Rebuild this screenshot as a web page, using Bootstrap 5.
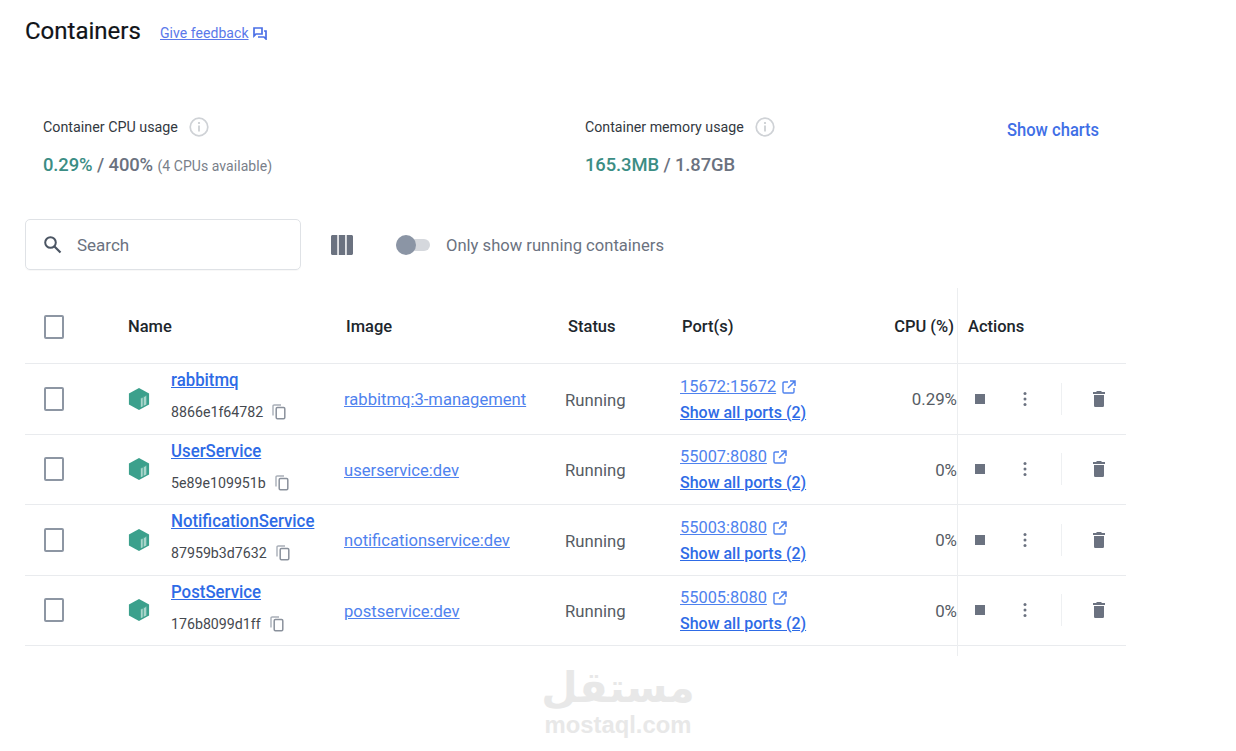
<!DOCTYPE html>
<html lang="en">
<head>
<meta charset="utf-8">
<title>Containers</title>
<link href="https://cdn.jsdelivr.net/npm/bootstrap@5.3.0/dist/css/bootstrap.min.css" rel="stylesheet">
<style>
body{font-family:Roboto,"Liberation Sans",sans-serif;background:#fff;color:#1f2937;height:751px;overflow:hidden;position:relative}
a{color:#2e6be6}
.shell{padding:15px 110px 0 25px}
.title-text{font-size:24px;line-height:32px;color:#101418;font-weight:400;margin:0;width:118px;white-space:nowrap;-webkit-text-stroke:.2px #101418}
.fb-link{font-size:14px;color:#5a78ea;margin-left:17px;letter-spacing:.05px;margin-top:4px}
.fb-icon{margin-top:4px}
.usage-row{margin-top:68px;padding-left:18px;height:72px}
.usage-a{width:542px}
.usage-b{width:422px}
.u-label{font-size:14.3px;line-height:24px;color:#33393f}
.usage-b .u-label{font-size:14.2px}
.u-info{margin-left:11px}
.u-value{font-size:18.4px;line-height:24px;margin-top:14px;color:#6b7280;font-weight:500;letter-spacing:-.1px}
.u-green{color:#3b8d84}
.u-note{font-size:14px;font-weight:400;color:#79808a;letter-spacing:.05px}
.charts-link{font-size:18px;font-weight:500;color:#3f6fe6;text-decoration:none;line-height:24px;transform:scaleX(.92);transform-origin:left;white-space:nowrap;margin-top:3px}
.tool-row{margin-top:32px;height:51px}
.search-box{width:276px;height:51px;border:1px solid #dfe2e6;border-radius:5px;padding-left:17px;color:#6b7280;font-size:17px;box-shadow:0 1px 1px rgba(0,0,0,.03)}
.search-box svg{margin-right:15px}
.search-word{padding-top:2px}
.cols-icon{margin-left:30px}
.fake-switch{width:34px;height:12px;border-radius:6px;background:#d5d8dd;margin-left:43px;position:relative;display:block}
.fake-knob{position:absolute;left:0;top:-4px;width:20px;height:20px;border-radius:50%;background:#8b95a5;display:block}
.switch-label{margin-left:16px;font-size:16.6px;color:#6b7280;padding-top:3px}
.grid-wrap{margin-top:19px;position:relative;width:1101px}
.v-rule{position:absolute;left:932px;top:-1px;bottom:-10px;width:1px;background:#eceef0}
.c-row{display:grid;grid-template-columns:103px 216px 221px 115px 200px 77px 1fr;border-bottom:1px solid #e9ebee;align-items:center;height:70.5px}
.c-head{height:75px;font-size:16.5px;font-weight:500;color:#20262c;padding-top:2px}
.c-head>div:nth-child(3){padding-left:2px}
.c-head>div:nth-child(4){padding-left:3px}
.c-head>div:nth-child(5){padding-left:2px}
.box-mark{width:20px;height:24px;border:2px solid #8d96a3;border-radius:2px;margin-left:19px;display:block}
.c-name{display:flex;align-items:center;gap:21px}
.n-title{font-size:17.5px;font-weight:500;line-height:24px;color:#2e6be6;display:inline-block;white-space:nowrap;transform:scaleX(.96);transform-origin:left}
.n-id{font-size:14.2px;color:#45494f;line-height:18px;margin-top:10px;white-space:nowrap}
.n-id svg{margin-left:9px;vertical-align:-3px}
.name-stack{margin-top:-8px}
.img-cell{padding-top:4px}
.i-link{font-size:16.6px;color:#4f82ee;white-space:nowrap}
.st-text{font-size:16.7px;color:#565c64;padding-top:3px}
.p-wrap{padding-top:1px}
.p-top{font-size:16.4px;line-height:25px;color:#4f82ee;white-space:nowrap}
.p-top svg{margin-left:6px;vertical-align:-2px}
.p-all{display:block;font-size:16.9px;font-weight:500;line-height:26px;color:#2e6be6;white-space:nowrap;transform:scaleX(.947);transform-origin:left}
.cpu-cell{text-align:right;font-size:16.9px;color:#565c64;white-space:nowrap;margin-left:-30px;padding-top:2px}
.act-cell{display:flex;align-items:center;padding-left:18px;height:100%}
.act-stop{width:10px;height:10px;background:#6b7280;display:block}
.act-more{margin-left:38px}
.act-sep{width:1px;height:32px;background:#eef0f2;margin-left:34px}
.act-del{margin-left:31px}
.c-head .cpu-cell{font-size:16.5px;font-weight:500;color:#20262c;padding-right:3px;padding-top:0}
.c-head .act-cell{padding-left:11px}
.water{position:absolute;left:518px;top:662px;width:200px;text-align:center;color:#e8e8e8;line-height:1}
.water-ar{font-family:"DejaVu Sans",sans-serif;font-weight:700;font-size:42px;line-height:52px;height:51px;display:block;white-space:nowrap}
.water-en{font-family:"Liberation Sans",sans-serif;font-weight:700;font-size:23.8px;line-height:24px;height:24px;display:block;white-space:nowrap}
</style>
</head>
<body>
<svg width="0" height="0" class="d-block" style="position:absolute">
<defs>
<symbol id="ic-copy" viewBox="0 0 14 16"><rect x="4.2" y="3.6" width="8.6" height="11.2" rx="1.2" fill="none" stroke="#8a919c" stroke-width="1.5"/><path d="M1 11.5V2.2C1 1.5 1.5 1 2.2 1H9" fill="none" stroke="#a9afb8" stroke-width="1.4"/></symbol>
<symbol id="ic-ext" viewBox="0 0 14 14"><path d="M6 2H2.2C1.5 2 1 2.5 1 3.2v8.6c0 .7.5 1.2 1.2 1.2h8.6c.7 0 1.2-.5 1.2-1.2V8" fill="none" stroke="#4f82ee" stroke-width="1.4"/><path d="M8 1h5v5M13 1L6 8" fill="none" stroke="#4f82ee" stroke-width="1.5"/></symbol>
<symbol id="ic-cube" viewBox="0 0 22 24"><path d="M11 0l11 6v12l-11 6L0 18V6z" fill="#3ba08c"/><path d="M13 11l6-3v10l-6 3z" fill="#a9d6cb"/><path d="M15.6 9.8v10M13 11l6-3" stroke="#3ba08c" stroke-width="1" fill="none"/></symbol>
<symbol id="ic-dots" viewBox="0 0 4 16"><circle cx="2" cy="2.5" r="1.5" fill="#6b7280"/><circle cx="2" cy="8" r="1.5" fill="#6b7280"/><circle cx="2" cy="13.5" r="1.5" fill="#6b7280"/></symbol>
<symbol id="ic-trash" viewBox="0 0 12 16"><path d="M4 0h4l1 1h3v2H0V1h3zM1 4h10v10.4c0 .9-.7 1.6-1.6 1.6H2.6C1.700 16 1 15.300 1 14.400z" fill="#6b7280"/></symbol>
<symbol id="ic-info" viewBox="0 0 20 20"><circle cx="10" cy="10" r="8.800" fill="none" stroke="#cfd2d6" stroke-width="1.700"/><rect x="9.200" y="8.500" width="1.600" height="6" fill="#c6cace"/><circle cx="10" cy="6" r="1.100" fill="#c6cace"/></symbol>
</defs>
</svg>
<main class="shell">
  <header class="d-flex align-items-center">
    <h1 class="title-text">Containers</h1>
    <a href="#" class="fb-link">Give feedback</a>
    <svg class="ms-1 fb-icon" width="14" height="13" viewBox="0 0 14 13"><path d="M1 1h8v6H3L1 9z" fill="#fff" stroke="#4a6fe6" stroke-width="1.700"/><path d="M11 4h2v8l-2-2H5" fill="none" stroke="#4a6fe6" stroke-width="1.700"/></svg>
  </header>

  <section class="usage-row d-flex">
    <div class="usage-a">
      <div class="u-label d-flex align-items-center">Container CPU usage<svg class="u-info" width="20" height="20"><use href="#ic-info"/></svg></div>
      <div class="u-value"><span class="u-green">0.29%</span> / 400% <span class="u-note">(4 CPUs available)</span></div>
    </div>
    <div class="usage-b">
      <div class="u-label d-flex align-items-center">Container memory usage<svg class="u-info" width="20" height="20"><use href="#ic-info"/></svg></div>
      <div class="u-value"><span class="u-green">165.3MB</span> / 1.87GB</div>
    </div>
    <a href="#" class="charts-link">Show charts</a>
  </section>

  <section class="tool-row d-flex align-items-center">
    <div class="search-box d-flex align-items-center">
      <svg width="19" height="19" viewBox="0 0 19 19"><circle cx="7.500" cy="7.500" r="5.300" fill="none" stroke="#4b5563" stroke-width="2"/><path d="M11.500 11.500l6 6" stroke="#4b5563" stroke-width="2.200"/></svg>
      <span class="search-word">Search</span>
    </div>
    <svg class="cols-icon" width="22" height="20" viewBox="0 0 22 20"><path d="M0 1.500C0 .7.700 0 1.500 0H6.300v20H1.500C.7 20 0 19.300 0 18.500zM7.800 0h6.400v20H7.800zM15.700 0h4.800c.8 0 1.500.7 1.500 1.500v17c0 .8-.7 1.500-1.500 1.500h-4.800z" fill="#6b7280"/></svg>
    <span class="fake-switch"><span class="fake-knob"></span></span>
    <span class="switch-label">Only show running containers</span>
  </section>

  <section class="grid-wrap">
    <div class="v-rule"></div>
    <div class="c-row c-head">
      <div><span class="box-mark"></span></div>
      <div>Name</div><div>Image</div><div>Status</div><div>Port(s)</div>
      <div class="cpu-cell">CPU (%)</div>
      <div class="act-cell">Actions</div>
    </div>

    <div class="c-row">
      <div><span class="box-mark"></span></div>
      <div class="c-name"><svg width="22" height="22"><use href="#ic-cube"/></svg><div class="name-stack"><a href="#" class="n-title">rabbitmq</a><div class="n-id">8866e1f64782<svg width="14" height="16"><use href="#ic-copy"/></svg></div></div></div>
      <div class="img-cell"><a href="#" class="i-link">rabbitmq:3-management</a></div>
      <div class="st-text">Running</div>
      <div class="p-wrap"><div class="p-top"><a href="#" class="p-top">15672:15672</a><svg width="14" height="14"><use href="#ic-ext"/></svg></div><a href="#" class="p-all">Show all ports (2)</a></div>
      <div class="cpu-cell">0.29%</div>
      <div class="act-cell"><span class="act-stop"></span><svg class="act-more" width="4" height="16"><use href="#ic-dots"/></svg><span class="act-sep"></span><svg class="act-del" width="12" height="16"><use href="#ic-trash"/></svg></div>
    </div>

    <div class="c-row">
      <div><span class="box-mark"></span></div>
      <div class="c-name"><svg width="22" height="22"><use href="#ic-cube"/></svg><div class="name-stack"><a href="#" class="n-title">UserService</a><div class="n-id">5e89e109951b<svg width="14" height="16"><use href="#ic-copy"/></svg></div></div></div>
      <div class="img-cell"><a href="#" class="i-link">userservice:dev</a></div>
      <div class="st-text">Running</div>
      <div class="p-wrap"><div class="p-top"><a href="#" class="p-top">55007:8080</a><svg width="14" height="14"><use href="#ic-ext"/></svg></div><a href="#" class="p-all">Show all ports (2)</a></div>
      <div class="cpu-cell">0%</div>
      <div class="act-cell"><span class="act-stop"></span><svg class="act-more" width="4" height="16"><use href="#ic-dots"/></svg><span class="act-sep"></span><svg class="act-del" width="12" height="16"><use href="#ic-trash"/></svg></div>
    </div>

    <div class="c-row">
      <div><span class="box-mark"></span></div>
      <div class="c-name"><svg width="22" height="22"><use href="#ic-cube"/></svg><div class="name-stack"><a href="#" class="n-title">NotificationService</a><div class="n-id">87959b3d7632<svg width="14" height="16"><use href="#ic-copy"/></svg></div></div></div>
      <div class="img-cell"><a href="#" class="i-link">notificationservice:dev</a></div>
      <div class="st-text">Running</div>
      <div class="p-wrap"><div class="p-top"><a href="#" class="p-top">55003:8080</a><svg width="14" height="14"><use href="#ic-ext"/></svg></div><a href="#" class="p-all">Show all ports (2)</a></div>
      <div class="cpu-cell">0%</div>
      <div class="act-cell"><span class="act-stop"></span><svg class="act-more" width="4" height="16"><use href="#ic-dots"/></svg><span class="act-sep"></span><svg class="act-del" width="12" height="16"><use href="#ic-trash"/></svg></div>
    </div>

    <div class="c-row">
      <div><span class="box-mark"></span></div>
      <div class="c-name"><svg width="22" height="22"><use href="#ic-cube"/></svg><div class="name-stack"><a href="#" class="n-title">PostService</a><div class="n-id">176b8099d1ff<svg width="14" height="16"><use href="#ic-copy"/></svg></div></div></div>
      <div class="img-cell"><a href="#" class="i-link">postservice:dev</a></div>
      <div class="st-text">Running</div>
      <div class="p-wrap"><div class="p-top"><a href="#" class="p-top">55005:8080</a><svg width="14" height="14"><use href="#ic-ext"/></svg></div><a href="#" class="p-all">Show all ports (2)</a></div>
      <div class="cpu-cell">0%</div>
      <div class="act-cell"><span class="act-stop"></span><svg class="act-more" width="4" height="16"><use href="#ic-dots"/></svg><span class="act-sep"></span><svg class="act-del" width="12" height="16"><use href="#ic-trash"/></svg></div>
    </div>
  </section>
</main>
<div class="water"><span class="water-ar" dir="rtl">مستقل</span><span class="water-en">mostaql.com</span></div>
</body>
</html>
